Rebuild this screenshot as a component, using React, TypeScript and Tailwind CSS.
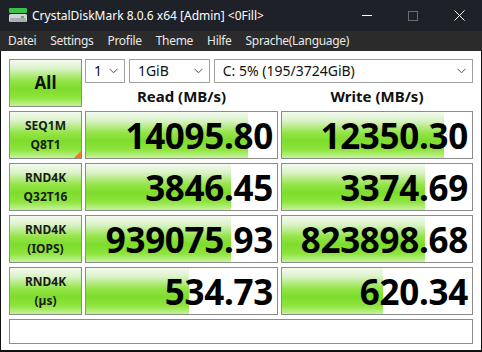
import React from "react";

const rows = [
  { l1: "SEQ1M", l2: "Q8T1", r: "14095.80", w: "12350.30", rp: 85, wp: 85, tri: true },
  { l1: "RND4K", l2: "Q32T16", r: "3846.45", w: "3374.69", rp: 76, wp: 75 },
  { l1: "RND4K", l2: "(IOPS)", r: "939075.93", w: "823898.68", rp: 76, wp: 75 },
  { l1: "RND4K", l2: "(µs)", r: "534.73", w: "620.34", rp: 54, wp: 53 },
];

const grad =
  "bg-[linear-gradient(to_bottom,#f4faf0_0%,#dcf3ca_18%,#94e448_45%,#7edc2c_62%,#8ee43e_82%,#c4f49a_100%)]";

function Chevron() {
  return (
    <svg width="9" height="6" viewBox="0 0 9 6" className="shrink-0">
      <path d="M0.5 0.8 L4.5 4.8 L8.5 0.8" fill="none" stroke="#555" strokeWidth="1" />
    </svg>
  );
}

function Select({ w, text }: { w: string; text: string }) {
  return (
    <div
      className={`${w} h-[24px] border border-[#a0a0a0] bg-white flex items-center justify-between pl-[8px] pr-[6px] text-[14px] text-[#111]`}
    >
      <span className="leading-none">{text}</span>
      <Chevron />
    </div>
  );
}

function Score({ v, p }: { v: string; p: number }) {
  return (
    <div className="relative h-[48px] border border-[#8c8c8c] bg-white overflow-hidden">
      <div className={`absolute left-0 top-0 bottom-0 ${grad}`} style={{ width: `${p}%` }} />
      <div className="relative h-full flex items-center justify-end pr-[4px] text-[35px] font-bold text-black leading-none tracking-[-0.3px]">
        {v}
      </div>
    </div>
  );
}

export default function App() {
  return (
    <div
      className="w-[482px] h-[352px] flex flex-col bg-[#1e2228] overflow-hidden"
      style={{ fontFamily: '"Noto Sans", "Open Sans", sans-serif' }}
    >
      {/* Title bar */}
      <div className="h-[31px] flex items-center text-white shrink-0">
        <svg width="20" height="18" viewBox="0 0 20 18" className="ml-[8px] mr-[4px]">
          <rect x="1" y="1" width="18" height="5" rx="1" fill="#3cc24a" />
          <rect x="1" y="7" width="18" height="8" rx="1.5" fill="#d0d4d8" />
          <rect x="2" y="11" width="16" height="4" rx="1" fill="#a9aeb3" />
          <rect x="13" y="9" width="3" height="2" fill="#3cc24a" />
        </svg>
        <span className="text-[12px] leading-none">CrystalDiskMark 8.0.6 x64 [Admin] &lt;0Fill&gt;</span>
        <div className="ml-auto flex items-center h-full">
          <div className="w-[46px] h-full flex items-center justify-center">
            <div className="w-[10px] h-[1px] bg-white" />
          </div>
          <div className="w-[46px] h-full flex items-center justify-center">
            <div className="w-[10px] h-[10px] border border-[#6a6e73]" />
          </div>
          <div className="w-[46px] h-full flex items-center justify-center">
            <svg width="11" height="11" viewBox="0 0 11 11">
              <path d="M0.5 0.5 L10.5 10.5 M10.5 0.5 L0.5 10.5" stroke="white" strokeWidth="1" />
            </svg>
          </div>
        </div>
      </div>
      {/* Menu bar */}
      <div className="h-[20px] bg-[#2b2b2b] flex items-center text-[12px] tracking-[-0.3px] text-[#e8e8e8] shrink-0 pl-[8px] gap-[14px] leading-none">
        <span>Datei</span>
        <span>Settings</span>
        <span>Profile</span>
        <span>Theme</span>
        <span>Hilfe</span>
        <span>Sprache(Language)</span>
      </div>
      {/* Content */}
      <div className="flex-1 bg-white border-l border-r border-b-2 border-[#111] pl-[8px] pt-[8px] flex flex-col">
        <div className="grid grid-cols-[73px_193px_192px] gap-x-[3px] gap-y-[4px]">
          {/* Top row */}
          <div className={`h-[48px] border border-[#8c8c8c] ${grad} flex items-center justify-center text-[17px] font-bold text-[#111]`}>
            All
          </div>
          <div className="col-span-2 h-[48px] flex flex-col">
            <div className="flex gap-[4px]">
              <Select w="w-[40px]" text="1" />
              <Select w="w-[81px]" text="1GiB" />
              <Select w="w-[260px]" text="C: 5% (195/3724GiB)" />
            </div>
            <div className="flex-1 grid grid-cols-[193px_192px] gap-x-[3px] items-center text-[15px] font-bold text-[#111]">
              <div className="text-center pt-[2px]">Read (MB/s)</div>
              <div className="text-center pt-[2px]">Write (MB/s)</div>
            </div>
          </div>
          {rows.map((r, i) => (
            <React.Fragment key={i}>
              <div
                className={`relative h-[48px] border border-[#8c8c8c] ${grad} flex flex-col items-center justify-center text-[12px] font-bold text-[#1a1a1a] leading-[19px]`}
              >
                <span>{r.l1}</span>
                <span>{r.l2}</span>
                {r.tri && (
                  <div className="absolute right-0 bottom-0 w-0 h-0 border-l-[7px] border-l-transparent border-b-[7px] border-b-[#f07a1c]" />
                )}
              </div>
              <Score v={r.r} p={r.rp} />
              <Score v={r.w} p={r.wp} />
            </React.Fragment>
          ))}
          <div className="col-span-3 h-[25px] border border-[#8c8c8c] bg-white" />
        </div>
      </div>
    </div>
  );
}
